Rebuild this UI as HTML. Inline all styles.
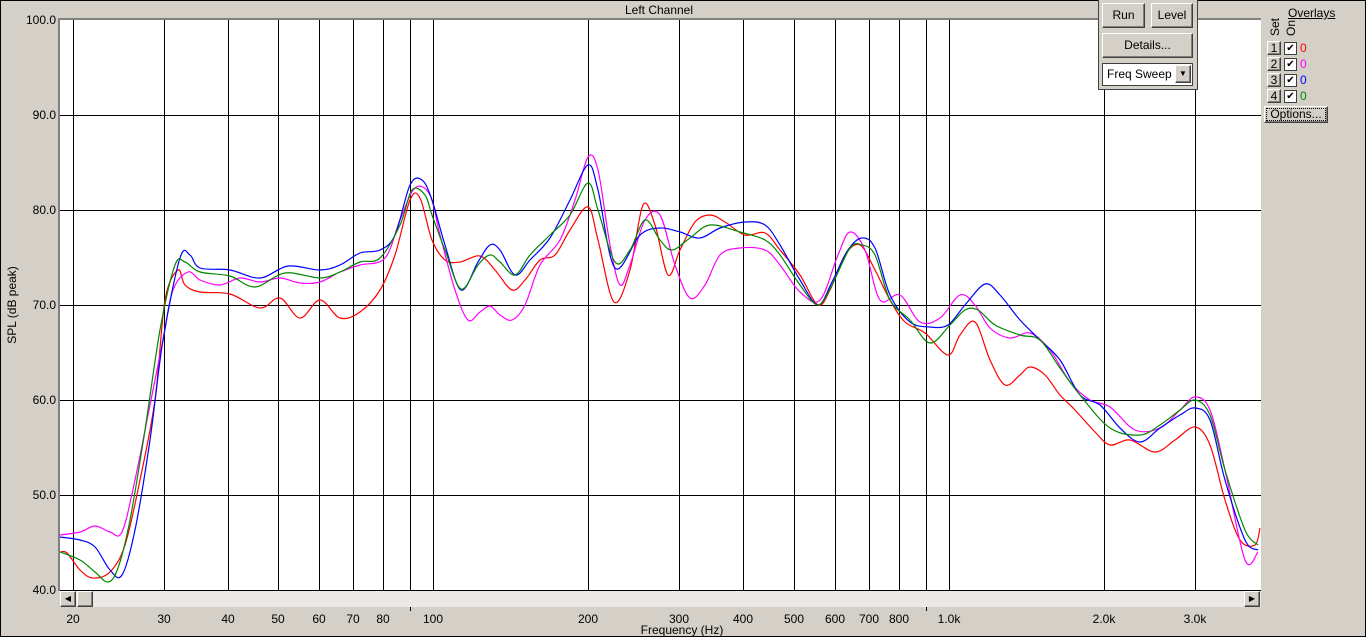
<!DOCTYPE html>
<html><head><style>
body{margin:0;width:1366px;height:637px;background:#d4d0c8;font-family:"Liberation Sans",sans-serif;font-size:12px;overflow:hidden;position:relative}
.a{position:absolute}
.btn{position:absolute;background:#d4d0c8;border:1px solid;border-color:#fff #404040 #404040 #fff;box-shadow:inset -1px -1px #808080;text-align:center;font-size:12px;color:#000;box-sizing:border-box}
</style></head><body>
<div class="a" style="left:0;top:0;width:1364px;height:635px;border:1px solid #000"></div>
<svg class="a" style="left:0;top:0" width="1366" height="637">
<rect x="58" y="18" width="1203" height="573" fill="#808080"/>
<rect x="60" y="20" width="1201" height="571" fill="#fff"/>
<g stroke="#000" stroke-width="1" shape-rendering="crispEdges">
<line x1="60" x2="1261" y1="115.5" y2="115.5"/><line x1="60" x2="1261" y1="210.5" y2="210.5"/><line x1="60" x2="1261" y1="305.5" y2="305.5"/><line x1="60" x2="1261" y1="400.5" y2="400.5"/><line x1="60" x2="1261" y1="495.5" y2="495.5"/><line x1="60" x2="1261" y1="590.5" y2="590.5"/>
<line y1="20" y2="591" x1="73.5" x2="73.5"/><line y1="20" y2="591" x1="164.5" x2="164.5"/><line y1="20" y2="591" x1="228.5" x2="228.5"/><line y1="20" y2="591" x1="278.5" x2="278.5"/><line y1="20" y2="591" x1="319.5" x2="319.5"/><line y1="20" y2="591" x1="353.5" x2="353.5"/><line y1="20" y2="591" x1="383.5" x2="383.5"/><line y1="20" y2="591" x1="410.5" x2="410.5"/><line y1="20" y2="591" x1="433.5" x2="433.5"/><line y1="20" y2="591" x1="588.5" x2="588.5"/><line y1="20" y2="591" x1="679.5" x2="679.5"/><line y1="20" y2="591" x1="743.5" x2="743.5"/><line y1="20" y2="591" x1="794.5" x2="794.5"/><line y1="20" y2="591" x1="835.5" x2="835.5"/><line y1="20" y2="591" x1="869.5" x2="869.5"/><line y1="20" y2="591" x1="899.5" x2="899.5"/><line y1="20" y2="591" x1="926.5" x2="926.5"/><line y1="20" y2="591" x1="949.5" x2="949.5"/><line y1="20" y2="591" x1="1104.5" x2="1104.5"/><line y1="20" y2="591" x1="1195.5" x2="1195.5"/>
</g>
<g id="curves" fill="none" stroke-width="1.2" stroke-linejoin="round">
<polyline stroke="#f00" points="60,552 67,553 80,570 93,578 110,572 125,545 140,480 155,400 165,300 178,270 185,285 200,292 230,294 260,308 280,298 300,318 320,300 340,318 360,312 380,290 395,255 410,200 420,198 432,240 445,260 460,262 480,256 495,270 512,290 525,280 540,260 555,255 570,230 588,207 598,240 614,302 630,270 643,205 655,225 668,275 680,250 695,222 710,215 725,222 745,235 765,233 780,250 800,275 818,305 830,290 845,255 860,245 875,270 890,300 905,322 925,333 948,355 960,335 975,322 990,360 1005,385 1020,375 1030,367 1045,375 1060,395 1075,410 1095,432 1110,445 1130,440 1155,452 1175,440 1195,427 1210,445 1225,500 1240,540 1255,545 1260,528"/>
<polyline stroke="#f0f" points="60,535 80,532 95,526 110,532 122,532 135,480 150,405 163,340 173,290 188,272 200,280 220,285 240,278 260,282 280,278 300,283 320,282 340,272 360,265 385,258 400,220 415,188 430,195 440,235 455,290 468,320 480,312 490,306 500,315 512,320 525,305 540,265 560,240 575,200 588,157 598,170 610,245 620,285 630,265 645,220 660,215 675,265 690,298 705,285 720,255 740,248 765,250 780,265 800,292 820,300 838,255 850,232 865,250 880,300 900,295 920,322 940,318 960,295 975,305 990,328 1010,338 1030,333 1050,350 1070,382 1090,400 1110,407 1135,430 1160,428 1180,410 1195,397 1210,410 1225,470 1245,560 1258,552"/>
<polyline stroke="#00f" points="60,537 80,540 95,547 110,570 122,575 135,530 150,440 163,340 180,258 190,255 200,268 230,270 260,278 288,266 320,270 340,265 360,253 380,250 395,235 410,185 422,180 432,200 445,245 461,290 478,262 490,245 500,250 515,275 530,260 550,238 570,200 588,165 598,190 615,268 640,235 660,228 680,232 700,238 720,228 745,222 765,225 780,245 800,280 818,305 832,282 848,250 862,238 875,248 890,295 910,322 930,327 948,325 965,305 985,284 1000,295 1020,320 1040,340 1060,360 1080,395 1100,405 1120,428 1140,442 1160,428 1180,415 1195,408 1210,420 1225,480 1245,540 1258,550"/>
<polyline stroke="#080" points="60,552 80,560 95,572 108,582 118,568 130,520 145,430 160,330 175,265 185,262 200,272 230,276 255,287 285,273 320,278 340,272 360,262 380,258 400,225 412,190 425,195 432,215 445,250 461,289 478,265 490,255 500,262 515,275 530,255 550,235 570,215 588,183 598,210 615,262 630,250 645,220 660,240 672,250 690,238 710,225 740,232 765,240 780,255 800,285 818,305 832,285 850,248 862,245 875,255 890,300 910,320 930,343 950,325 965,310 978,310 995,325 1020,335 1040,340 1060,368 1080,395 1110,428 1140,435 1160,425 1180,410 1195,400 1210,415 1225,470 1245,530 1258,545"/>
</g>
<rect x="60" y="591" width="1201" height="16" fill="#ebe9e5"/>
<g font-family="Liberation Sans" font-size="12" fill="#000" text-anchor="end">
<text x="56" y="24">100.0</text><text x="56" y="119">90.0</text><text x="56" y="214">80.0</text><text x="56" y="309">70.0</text><text x="56" y="404">60.0</text><text x="56" y="499">50.0</text><text x="56" y="594">40.0</text>
</g>
<g font-family="Liberation Sans" font-size="12" fill="#000" text-anchor="middle">
<text x="73" y="623">20</text><text x="164" y="623">30</text><text x="228" y="623">40</text><text x="278" y="623">50</text><text x="319" y="623">60</text><text x="353" y="623">70</text><text x="383" y="623">80</text><text x="433" y="623">100</text><text x="588" y="623">200</text><text x="679" y="623">300</text><text x="743" y="623">400</text><text x="794" y="623">500</text><text x="835" y="623">600</text><text x="869" y="623">700</text><text x="899" y="623">800</text><text x="949" y="623">1.0k</text><text x="1104" y="623">2.0k</text><text x="1195" y="623">3.0k</text>
<text x="682" y="634">Frequency (Hz)</text>
<text x="659" y="14">Left Channel</text>
<text transform="translate(16,305) rotate(-90)">SPL (dB peak)</text>
</g>
<rect x="410" y="607" width="1" height="4" fill="#000"/><rect x="926" y="607" width="1" height="4" fill="#000"/>
</svg>
<script>
document.querySelectorAll('#curves polyline').forEach(function(pl){
 var p=pl.getAttribute('points').trim().split(/\s+/).map(function(s){return s.split(',').map(Number)});
 var d='M'+p[0][0]+','+p[0][1];
 for(var i=0;i<p.length-1;i++){
  var p0=p[i-1]||p[i],p1=p[i],p2=p[i+1],p3=p[i+2]||p2;
  var c1x=p1[0]+(p2[0]-p0[0])/6,c1y=p1[1]+(p2[1]-p0[1])/6;
  var c2x=p2[0]-(p3[0]-p1[0])/6,c2y=p2[1]-(p3[1]-p1[1])/6;
  d+=' C'+c1x.toFixed(1)+','+c1y.toFixed(1)+' '+c2x.toFixed(1)+','+c2y.toFixed(1)+' '+p2[0]+','+p2[1];
 }
 var path=document.createElementNS('http://www.w3.org/2000/svg','path');
 path.setAttribute('d',d);path.setAttribute('stroke',pl.getAttribute('stroke'));
 pl.parentNode.replaceChild(path,pl);
});
</script>
<div class="btn" style="left:60px;top:591px;width:16px;height:16px;font-size:8px;line-height:14px">◀</div>
<div class="btn" style="left:77px;top:591px;width:16px;height:16px"></div>
<div class="btn" style="left:1244px;top:591px;width:16px;height:16px;font-size:8px;line-height:14px">▶</div>
<div class="a" style="left:1098px;top:0;width:100px;height:90px;background:#d4d0c8;border:1px solid #404040;border-top:none;box-sizing:border-box"></div>
<div class="btn" style="left:1102px;top:3px;width:43px;height:25px;line-height:23px">Run</div>
<div class="btn" style="left:1151px;top:3px;width:42px;height:25px;line-height:23px">Level</div>
<div class="btn" style="left:1102px;top:33px;width:91px;height:25px;line-height:23px">Details...</div>
<div class="a" style="left:1102px;top:63px;width:91px;height:23px;background:#fff;border:1px solid #404040;box-sizing:border-box;line-height:21px;padding-left:4px">Freq Sweep</div>
<div class="btn" style="left:1175px;top:65px;width:16px;height:18px;font-size:8px;line-height:16px">▼</div>
<div class="a" style="left:1288px;top:6px;text-decoration:underline">Overlays</div>
<div class="a" style="left:1268px;top:36px;transform:rotate(-90deg);transform-origin:left top;font-size:12px">Set</div>
<div class="a" style="left:1284px;top:36px;transform:rotate(-90deg);transform-origin:left top;font-size:12px">On</div>
<div class="btn" style="left:1267px;top:41px;width:14px;height:14px;line-height:12px">1</div>
<div class="btn" style="left:1267px;top:57px;width:14px;height:14px;line-height:12px">2</div>
<div class="btn" style="left:1267px;top:73px;width:14px;height:14px;line-height:12px">3</div>
<div class="btn" style="left:1267px;top:89px;width:14px;height:14px;line-height:12px">4</div>
<div class="a" style="left:1284px;top:42px;width:13px;height:13px;background:#fff;border:1px solid #404040;box-sizing:border-box;font-size:10px;line-height:11px;text-align:center">✔</div>
<div class="a" style="left:1284px;top:58px;width:13px;height:13px;background:#fff;border:1px solid #404040;box-sizing:border-box;font-size:10px;line-height:11px;text-align:center">✔</div>
<div class="a" style="left:1284px;top:74px;width:13px;height:13px;background:#fff;border:1px solid #404040;box-sizing:border-box;font-size:10px;line-height:11px;text-align:center">✔</div>
<div class="a" style="left:1284px;top:90px;width:13px;height:13px;background:#fff;border:1px solid #404040;box-sizing:border-box;font-size:10px;line-height:11px;text-align:center">✔</div>
<div class="a" style="left:1300px;top:41px;color:#f00">0</div>
<div class="a" style="left:1300px;top:57px;color:#f0f">0</div>
<div class="a" style="left:1300px;top:73px;color:#00f">0</div>
<div class="a" style="left:1300px;top:89px;color:#080">0</div>
<div class="btn" style="left:1264px;top:106px;width:64px;height:17px;line-height:14px;outline:1px dotted #000;outline-offset:-3px">Options...</div>
</body></html>
